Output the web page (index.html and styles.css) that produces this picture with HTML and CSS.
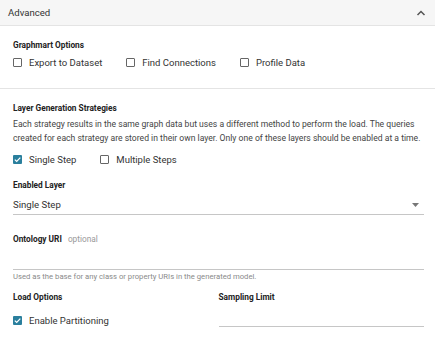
FILE: index.html
```html
<!DOCTYPE html>
<html lang="en">
<head>
  <meta charset="UTF-8" />
  <meta name="viewport" content="width=device-width, initial-scale=1.0"/>
  <link rel="stylesheet" href="styles.css">
</head>
<body>
  <div class="panel-head">
    <span>Advanced</span>
    <svg class="chevron" width="10" height="6" viewBox="0 0 10 6"><path d="M1.5 5 L5 1.5 L8.5 5" fill="none" stroke="#555" stroke-width="1.5"/></svg>
  </div>

  <div class="section first">
    <div class="label">Graphmart Options</div>
    <div class="checks">
      <label class="check"><span class="box"></span>Export to Dataset</label>
      <label class="check"><span class="box"></span>Find Connections</label>
      <label class="check"><span class="box"></span>Profile Data</label>
    </div>
  </div>

  <div class="section second">
    <div class="label">Layer Generation Strategies</div>
    <p class="desc">Each strategy results in the same graph data but uses a different method to perform the load. The queries created for each strategy are stored in their own layer. Only one of these layers should be enabled at a time.</p>
    <div class="checks">
      <label class="check"><span class="box on"><svg width="9" height="9" viewBox="0 0 9 9"><path d="M1.8 4.6 L3.7 6.4 L7.3 2.6" fill="none" stroke="#fff" stroke-width="1.3"/></svg></span>Single Step</label>
      <label class="check"><span class="box"></span>Multiple Steps</label>
    </div>

    <div class="label gap-enabled">Enabled Layer</div>
    <div class="select">
      <span>Single Step</span>
      <svg width="7" height="4" viewBox="0 0 7 4"><path d="M0 0 L7 0 L3.5 4 Z" fill="#777"/></svg>
    </div>

    <div class="label gap-onto">Ontology URI <span class="optional">optional</span></div>
    <div class="input tall"></div>
    <div class="hint">Used as the base for any class or property URIs in the generated model.</div>

    <div class="cols">
      <div>
        <div class="label">Load Options</div>
        <div class="checks gap-part">
          <label class="check"><span class="box on"><svg width="9" height="9" viewBox="0 0 9 9"><path d="M1.8 4.6 L3.7 6.4 L7.3 2.6" fill="none" stroke="#fff" stroke-width="1.3"/></svg></span>Enable Partitioning</label>
        </div>
      </div>
      <div>
        <div class="label">Sampling Limit</div>
        <div class="input short"></div>
      </div>
    </div>
  </div>
</body>
</html>
```

FILE: styles.css
```css
body {
  margin: 0;
  font-family: Roboto, "Liberation Sans", sans-serif;
  color: #222;
  background: #fff;
  overflow: hidden;
}

.panel-head {
  height: 25px;
  background-color: #f6f6f6;
  border-bottom: 1px solid #e4e4e4;
  padding: 0 9px 0 8px;
  display: flex;
  align-items: center;
  justify-content: space-between;
  font-size: 9.6px;
  color: #333;
}

.section {
  padding: 0 11px 0 13px;
}
.section.first {
  padding-top: 13px;
  padding-bottom: 18px;
  border-bottom: 1px solid #e4e4e4;
}
.section.second {
  padding-top: 13px;
}

.label {
  font-size: 8.3px;
  font-weight: 700;
  line-height: 12px;
  height: 12px;
  color: #222;
}
.optional {
  font-weight: 400;
  color: #9a9a9a;
  margin-left: 4px;
}

.checks {
  display: flex;
  gap: 24px;
  height: 16px;
  align-items: center;
  margin-top: 3px;
}
.check {
  display: flex;
  align-items: center;
  gap: 7px;
  font-size: 9.5px;
  color: #333;
}
.box {
  width: 7px;
  height: 7px;
  border: 1px solid #666;
  border-radius: 1px;
  display: flex;
  align-items: center;
  justify-content: center;
}
.box.on {
  width: 9px;
  height: 9px;
  border: none;
  background-color: #2a7f9d;
}

.desc {
  margin: 3px 0 0;
  font-size: 8.6px;
  line-height: 14px;
  color: #444;
}
.second > .checks {
  margin-top: 6px;
}

.gap-enabled {
  margin-top: 12px;
}
.select {
  margin-top: 4px;
  height: 19px;
  border-bottom: 1px solid #c6c6c6;
  display: flex;
  align-items: center;
  justify-content: space-between;
  padding-right: 5px;
  font-size: 9.6px;
  color: #333;
}

.gap-onto {
  margin-top: 18px;
}
.input {
  border-bottom: 1px solid #c6c6c6;
}
.input.tall {
  height: 24px;
}
.hint {
  margin-top: 2px;
  font-size: 7.7px;
  line-height: 10px;
  color: #8a8a8a;
}

.cols {
  display: grid;
  grid-template-columns: 1fr 1fr;
  margin-top: 9px;
}
.gap-part {
  margin-top: 9px;
}
.input.short {
  height: 23px;
}
```
